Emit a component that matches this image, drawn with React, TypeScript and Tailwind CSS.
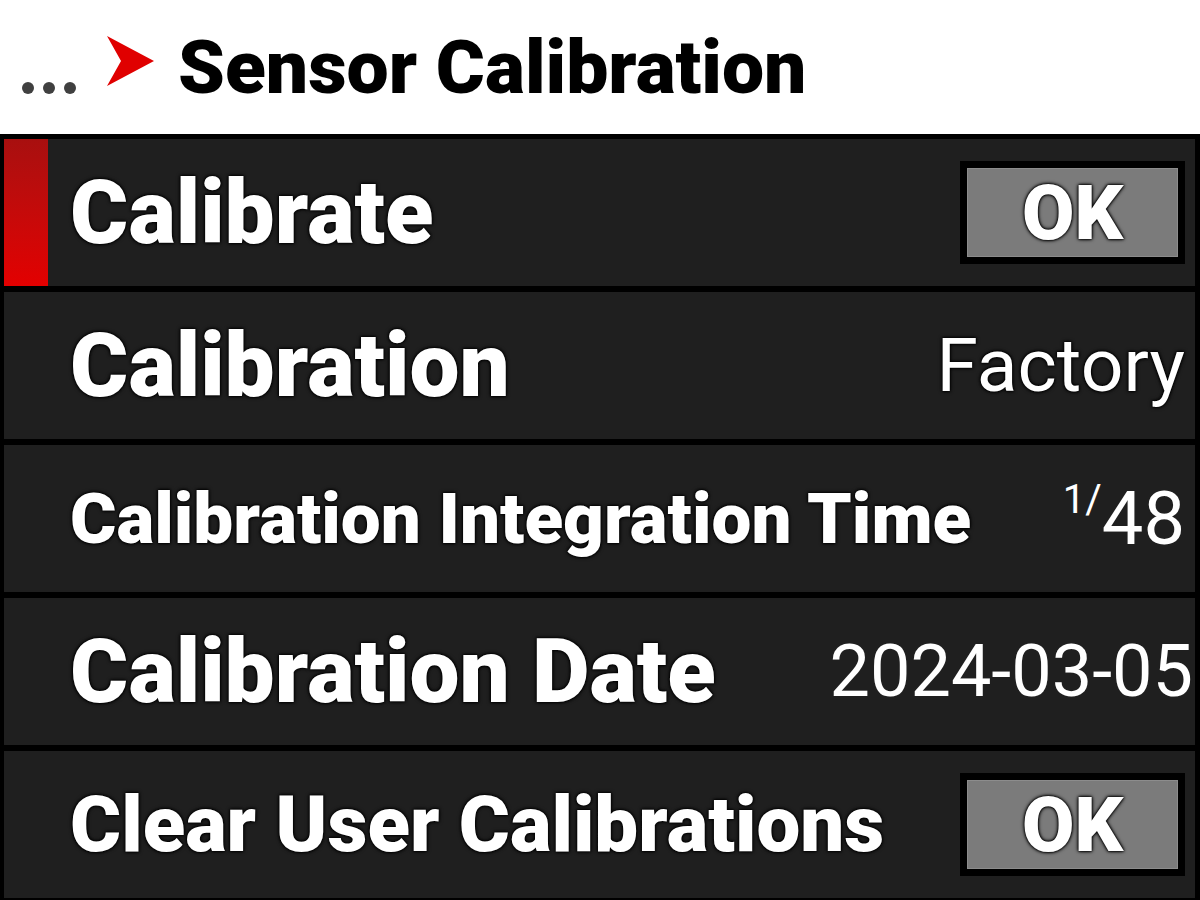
import React from "react";

const outline = "[text-shadow:0_0_2px_#000,0_0_3px_#000,0_0_4px_#000]";

function OkButton() {
  return (
    <div className="bg-black p-[7px] w-[225px] h-[103px]">
      <div className="h-full w-full bg-[#7b7b7b] border border-[#8c8c8c] flex items-center justify-center">
        <span className={`text-white font-black text-[76px] leading-none ${outline}`}>OK</span>
      </div>
    </div>
  );
}

function Row({
  label,
  labelSize = "text-[89px]",
  selected,
  right,
}: {
  label: string;
  labelSize?: string;
  selected?: boolean;
  right: React.ReactNode;
}) {
  return (
    <div className="h-[147px] bg-[#1f1f1f] flex items-center relative">
      {selected && (
        <div className="absolute left-0 top-0 bottom-0 w-[44px] bg-gradient-to-b from-[#a80f0f] to-[#e30000]" />
      )}
      <div className={`pl-[66px] flex-1 text-white font-black leading-none whitespace-nowrap ${labelSize} ${outline}`}>
        {label}
      </div>
      <div className="pr-[10px] flex items-center">{right}</div>
    </div>
  );
}

export default function App() {
  return (
    <div
      className="w-[1200px] h-[900px] overflow-hidden bg-black flex flex-col"
      style={{ fontFamily: "Roboto, 'Liberation Sans', sans-serif" }}
    >
      <div className="h-[134px] bg-white flex items-center pl-[22px] shrink-0">
        <div className="flex gap-[9px] items-end pt-[42px]">
          <span className="w-[12px] h-[12px] rounded-full bg-[#404040]" />
          <span className="w-[12px] h-[12px] rounded-full bg-[#404040]" />
          <span className="w-[12px] h-[12px] rounded-full bg-[#404040]" />
        </div>
        <svg width="50" height="50" viewBox="0 0 50 50" className="ml-[30px] mb-[12px]">
          <path d="M1 0 L48 25 L1 50 L15 25 Z" fill="#e00000" />
        </svg>
        <div className="ml-[22px] text-black font-black text-[75px] leading-none">Sensor Calibration</div>
      </div>
      <div className="flex-1 flex flex-col gap-[6px] pt-[5px] pl-[4px] pr-[5px]">
        <Row label="Calibrate" selected right={<OkButton />} />
        <Row
          label="Calibration"
          right={<span className={`text-white text-[75px] leading-none ${outline}`}>Factory</span>}
        />
        <Row
          label="Calibration Integration Time"
          labelSize="text-[71px]"
          right={
            <span className="text-white leading-none flex items-start">
              <span className="text-[40px] mt-[-2px]">1/</span>
              <span className="text-[74px]">48</span>
            </span>
          }
        />
        <Row
          label="Calibration Date"
          labelSize="text-[89px]"
          right={<span className="text-white text-[72px] leading-none mr-[-8px]">2024-03-05</span>}
        />
        <Row label="Clear User Calibrations" labelSize="text-[78px]" right={<OkButton />} />
      </div>
    </div>
  );
}
